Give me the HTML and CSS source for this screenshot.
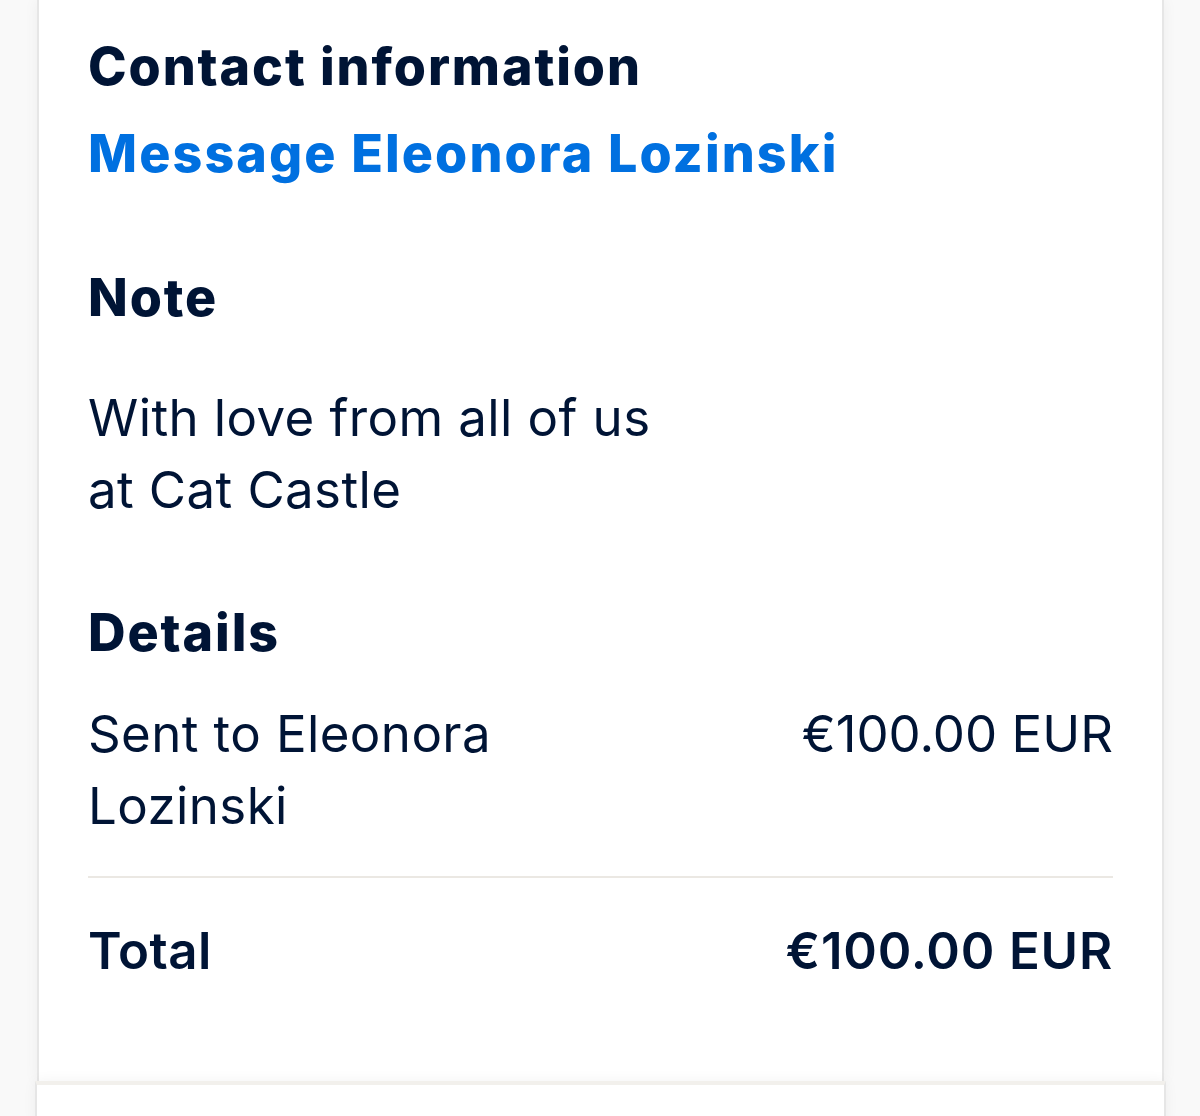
FILE: index.html
```html
<!DOCTYPE html>
<html lang="en">
<head>
<meta charset="utf-8">
<title>Transaction details</title>
<link rel="stylesheet" href="styles.css">
</head>
<body>
<main class="page">
  <section class="card">
    <h2 class="heading heading-contact">Contact information</h2>
    <a class="contact-link" href="#">Message Eleonora Lozinski</a>

    <h2 class="heading heading-note">Note</h2>
    <p class="note-text">With love from all of us<br>at Cat Castle</p>

    <h2 class="heading heading-details">Details</h2>
    <div class="row row-item">
      <span class="row-label">Sent to Eleonora<br>Lozinski</span>
      <span class="row-value">€100.00 EUR</span>
    </div>
    <hr class="divider">
    <div class="row row-total">
      <span class="row-label">Total</span>
      <span class="row-value">€100.00 EUR</span>
    </div>
  </section>
  <section class="card card-next"></section>
</main>
</body>
</html>
```

FILE: styles.css
```css
html, body {
  margin: 0;
  padding: 0;
}

body {
  background: #f9f9f9;
  font-family: Inter, "Noto Sans", "Liberation Sans", sans-serif;
  color: #001435;
  height: 1116px;
  overflow: hidden;
}

.page {
  width: 1127px;
  margin: 0 auto 0 37px;
}

.card {
  background: #ffffff;
  border-left: 2px solid #e6e6e6;
  border-right: 2px solid #e6e6e6;
  box-shadow: 0 0 14px rgba(0, 0, 0, 0.05);
  padding: 36px 49px 94px 49px;
  display: flex;
  flex-direction: column;
  align-items: flex-start;
}

.card-next {
  border-top: 4px solid #f2f0ec;
  padding: 0;
  height: 40px;
  margin-left: -2px;
  margin-right: -2px;
}

.heading,
.contact-link {
  margin: 0;
  font-size: 52px;
  line-height: 62px;
  font-weight: 800;
  letter-spacing: 1.9px;
}

.contact-link {
  margin-top: 25px;
  color: #0070e0;
  text-decoration: none;
  letter-spacing: 2.1px;
}

.heading-note {
  margin-top: 82px;
}

.note-text {
  margin: 53px 0 0;
  font-size: 51px;
  line-height: 72px;
  font-weight: 400;
  letter-spacing: 0.4px;
}

.heading-details {
  margin-top: 76px;
}

.row {
  align-self: stretch;
  display: flex;
  justify-content: space-between;
  align-items: flex-start;
  font-size: 51px;
  line-height: 72px;
  letter-spacing: 0.4px;
}

.row-item {
  margin-top: 34px;
}

.row-item .row-value {
  font-weight: 400;
  letter-spacing: 0;
}

.divider {
  align-self: stretch;
  margin: 34px 0 0;
  border: 0;
  height: 2px;
  background: #ebe8e3;
}

.row-total {
  margin-top: 37px;
  font-weight: 600;
}

.row-total .row-value {
  letter-spacing: 0.8px;
}
```
